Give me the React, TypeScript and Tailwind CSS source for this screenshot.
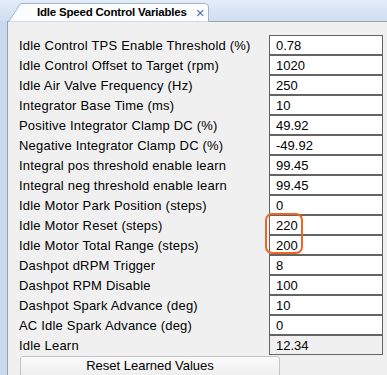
import React from 'react';

const rows: { label: string; value: string; readOnly?: boolean }[] = [
  { label: 'Idle Control TPS Enable Threshold (%)', value: '0.78' },
  { label: 'Idle Control Offset to Target (rpm)', value: '1020' },
  { label: 'Idle Air Valve Frequency (Hz)', value: '250' },
  { label: 'Integrator Base Time (ms)', value: '10' },
  { label: 'Positive Integrator Clamp DC (%)', value: '49.92' },
  { label: 'Negative Integrator Clamp DC (%)', value: '-49.92' },
  { label: 'Integral pos threshold enable learn', value: '99.45' },
  { label: 'Integral neg threshold enable learn', value: '99.45' },
  { label: 'Idle Motor Park Position (steps)', value: '0' },
  { label: 'Idle Motor Reset (steps)', value: '220' },
  { label: 'Idle Motor Total Range (steps)', value: '200' },
  { label: 'Dashpot dRPM Trigger', value: '8' },
  { label: 'Dashpot RPM Disable', value: '100' },
  { label: 'Dashpot Spark Advance (deg)', value: '10' },
  { label: 'AC Idle Spark Advance (deg)', value: '0' },
  { label: 'Idle Learn', value: '12.34', readOnly: true },
];

const App: React.FC = () => {
  return (
    <div
      className="relative w-[387px] h-[375px] overflow-hidden bg-[#f0f0f0] text-[13px] text-black"
      style={{ fontFamily: '"Liberation Sans", Arial, sans-serif' }}
    >
      {/* Tab strip */}
      <div className="relative h-[21px] bg-gradient-to-b from-[#e4edf9] to-[#cfdef2]">
        <div className="absolute left-[8px] top-[3px] w-[201px] h-[19px]">
          <svg width="201" height="19" className="absolute inset-0">
            <path d="M0.5 19 L12.5 0.5 L197 0.5 Q200.5 0.5 200.5 4 L200.5 19 Z" fill="#fbfcfe" stroke="#a6b4c6" />
          </svg>
          <div className="relative flex items-center h-full pl-[29px] whitespace-nowrap">
            <span className="font-bold text-[11.5px] tracking-[-0.2px]">Idle Speed Control Variables</span>
            <span className="ml-[9px] text-[#5070a0] text-[15px] leading-none">×</span>
          </div>
        </div>
      </div>

      {/* Body */}
      <div className="flex h-[354px]">
        <div className="w-[7px] bg-[#c9daf0]" />
        <div className="flex-1 border-l border-t border-[#a0a0a0] pt-[13px] pr-[4px]">
          <div className="flex flex-col">
            {rows.map((row, i) => (
              <div key={i} className="flex items-center h-[20px]">
                <div className="flex-1 pl-[11px] leading-none whitespace-nowrap tracking-[0.2px]">{row.label}</div>
                <div
                  className={`w-[114px] h-[20px] border border-[#646464] pl-[6px] flex items-center leading-none ${
                    row.readOnly ? 'bg-[#f0f0f0]' : 'bg-white'
                  }`}
                >
                  {row.value}
                </div>
              </div>
            ))}
          </div>
          <div className="ml-[12px] mt-[1px] w-[260px] h-[24px] rounded-[3px] border border-[#c4c4c4] bg-gradient-to-b from-[#fafafa] to-[#ececec] flex items-start justify-center pt-[1px] leading-[16px]">
            Reset Learned Values
          </div>
        </div>
      </div>

      {/* Annotation */}
      <div className="absolute left-[265px] top-[213px] w-[38px] h-[41px] rounded-[7px] border-2 border-[#f2651f]" />
    </div>
  );
};

export default App;
